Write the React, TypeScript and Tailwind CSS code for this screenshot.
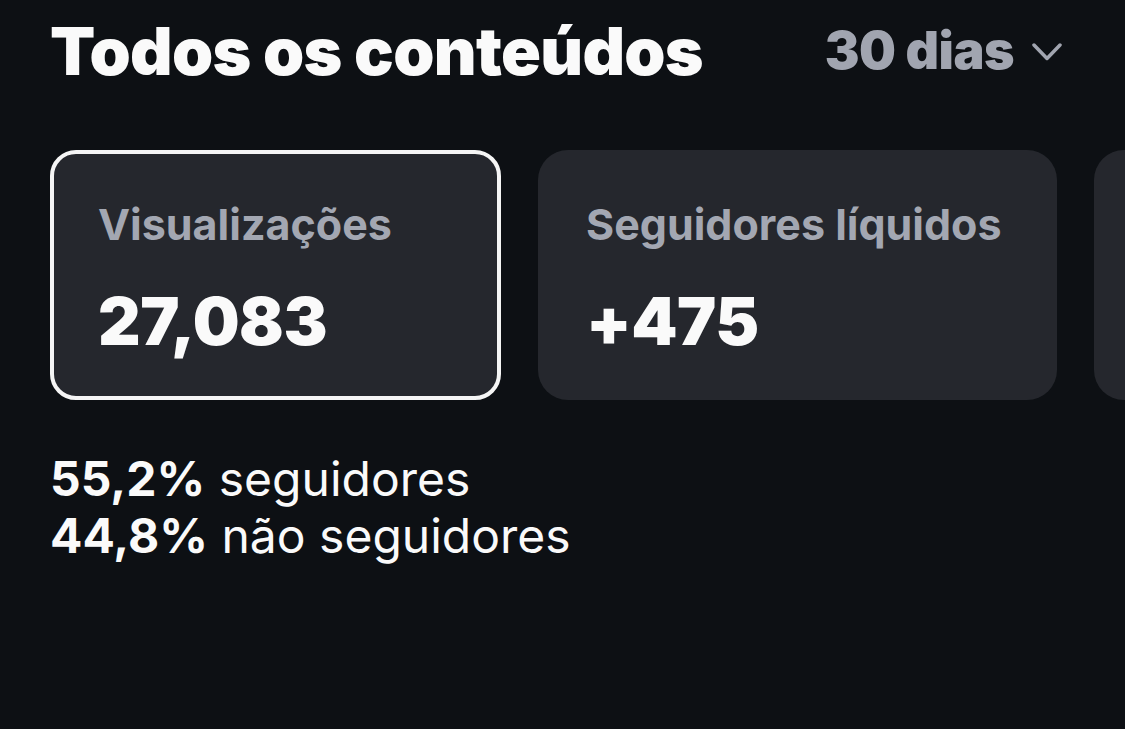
type Stat = {
  label: string;
  value: string;
  selected?: boolean;
};

const stats: Stat[] = [
  { label: "Visualizações", value: "27,083", selected: true },
  { label: "Seguidores líquidos", value: "+475" },
  { label: "", value: "" },
];

export default function App() {
  return (
    <main
      className="w-[1125px] h-[729px] overflow-hidden bg-[#0d1014] text-white"
      style={{ fontFamily: "Inter, 'Noto Sans', sans-serif" }}
    >
      <div className="flex items-center justify-between pl-[50px] pr-[63px] pt-[11px]">
        <h1 className="text-[66px] leading-[80px] font-black tracking-[-0.7px] text-[#fafafa]">
          Todos os conteúdos
        </h1>
        <button className="flex items-center gap-[18px] text-[#a1a5b0]">
          <span className="text-[52px] leading-[60px] font-black tracking-[-0.5px]">30 dias</span>
          <svg width="30" height="18" viewBox="0 0 30 18" fill="none" className="mt-[2px]">
            <polyline
              points="2,2 15,15.5 28,2"
              stroke="currentColor"
              strokeWidth="3.5"
              strokeLinecap="round"
              strokeLinejoin="round"
            />
          </svg>
        </button>
      </div>

      <div className="flex gap-[37px] pl-[50px] mt-[59px]">
        {stats.map((s, i) => (
          <div
            key={i}
            className={
              s.selected
                ? "shrink-0 w-[451px] h-[250px] rounded-[26px] border-[4px] border-[#f5f5f5] bg-[#25272d] px-[44px] pt-[48px]"
                : "shrink-0 w-[519px] h-[250px] rounded-[30px] bg-[#25272d] px-[48px] pt-[52px]"
            }
          >
            {s.label && (
              <>
                <p className="text-[43px] leading-[44px] font-bold text-[#a3a7b2] whitespace-nowrap">
                  {s.label}
                </p>
                <p className="mt-[40px] text-[66px] leading-[70px] font-black tracking-[-0.5px] text-[#fafafa]">
                  {s.value}
                </p>
              </>
            )}
          </div>
        ))}
      </div>

      <div className="pl-[50px] mt-[50px] text-[48px] leading-[57px] text-[#fafafa]">
        <p>
          <span className="font-bold">55,2%</span> seguidores
        </p>
        <p>
          <span className="font-bold">44,8%</span> não seguidores
        </p>
      </div>
    </main>
  );
}
